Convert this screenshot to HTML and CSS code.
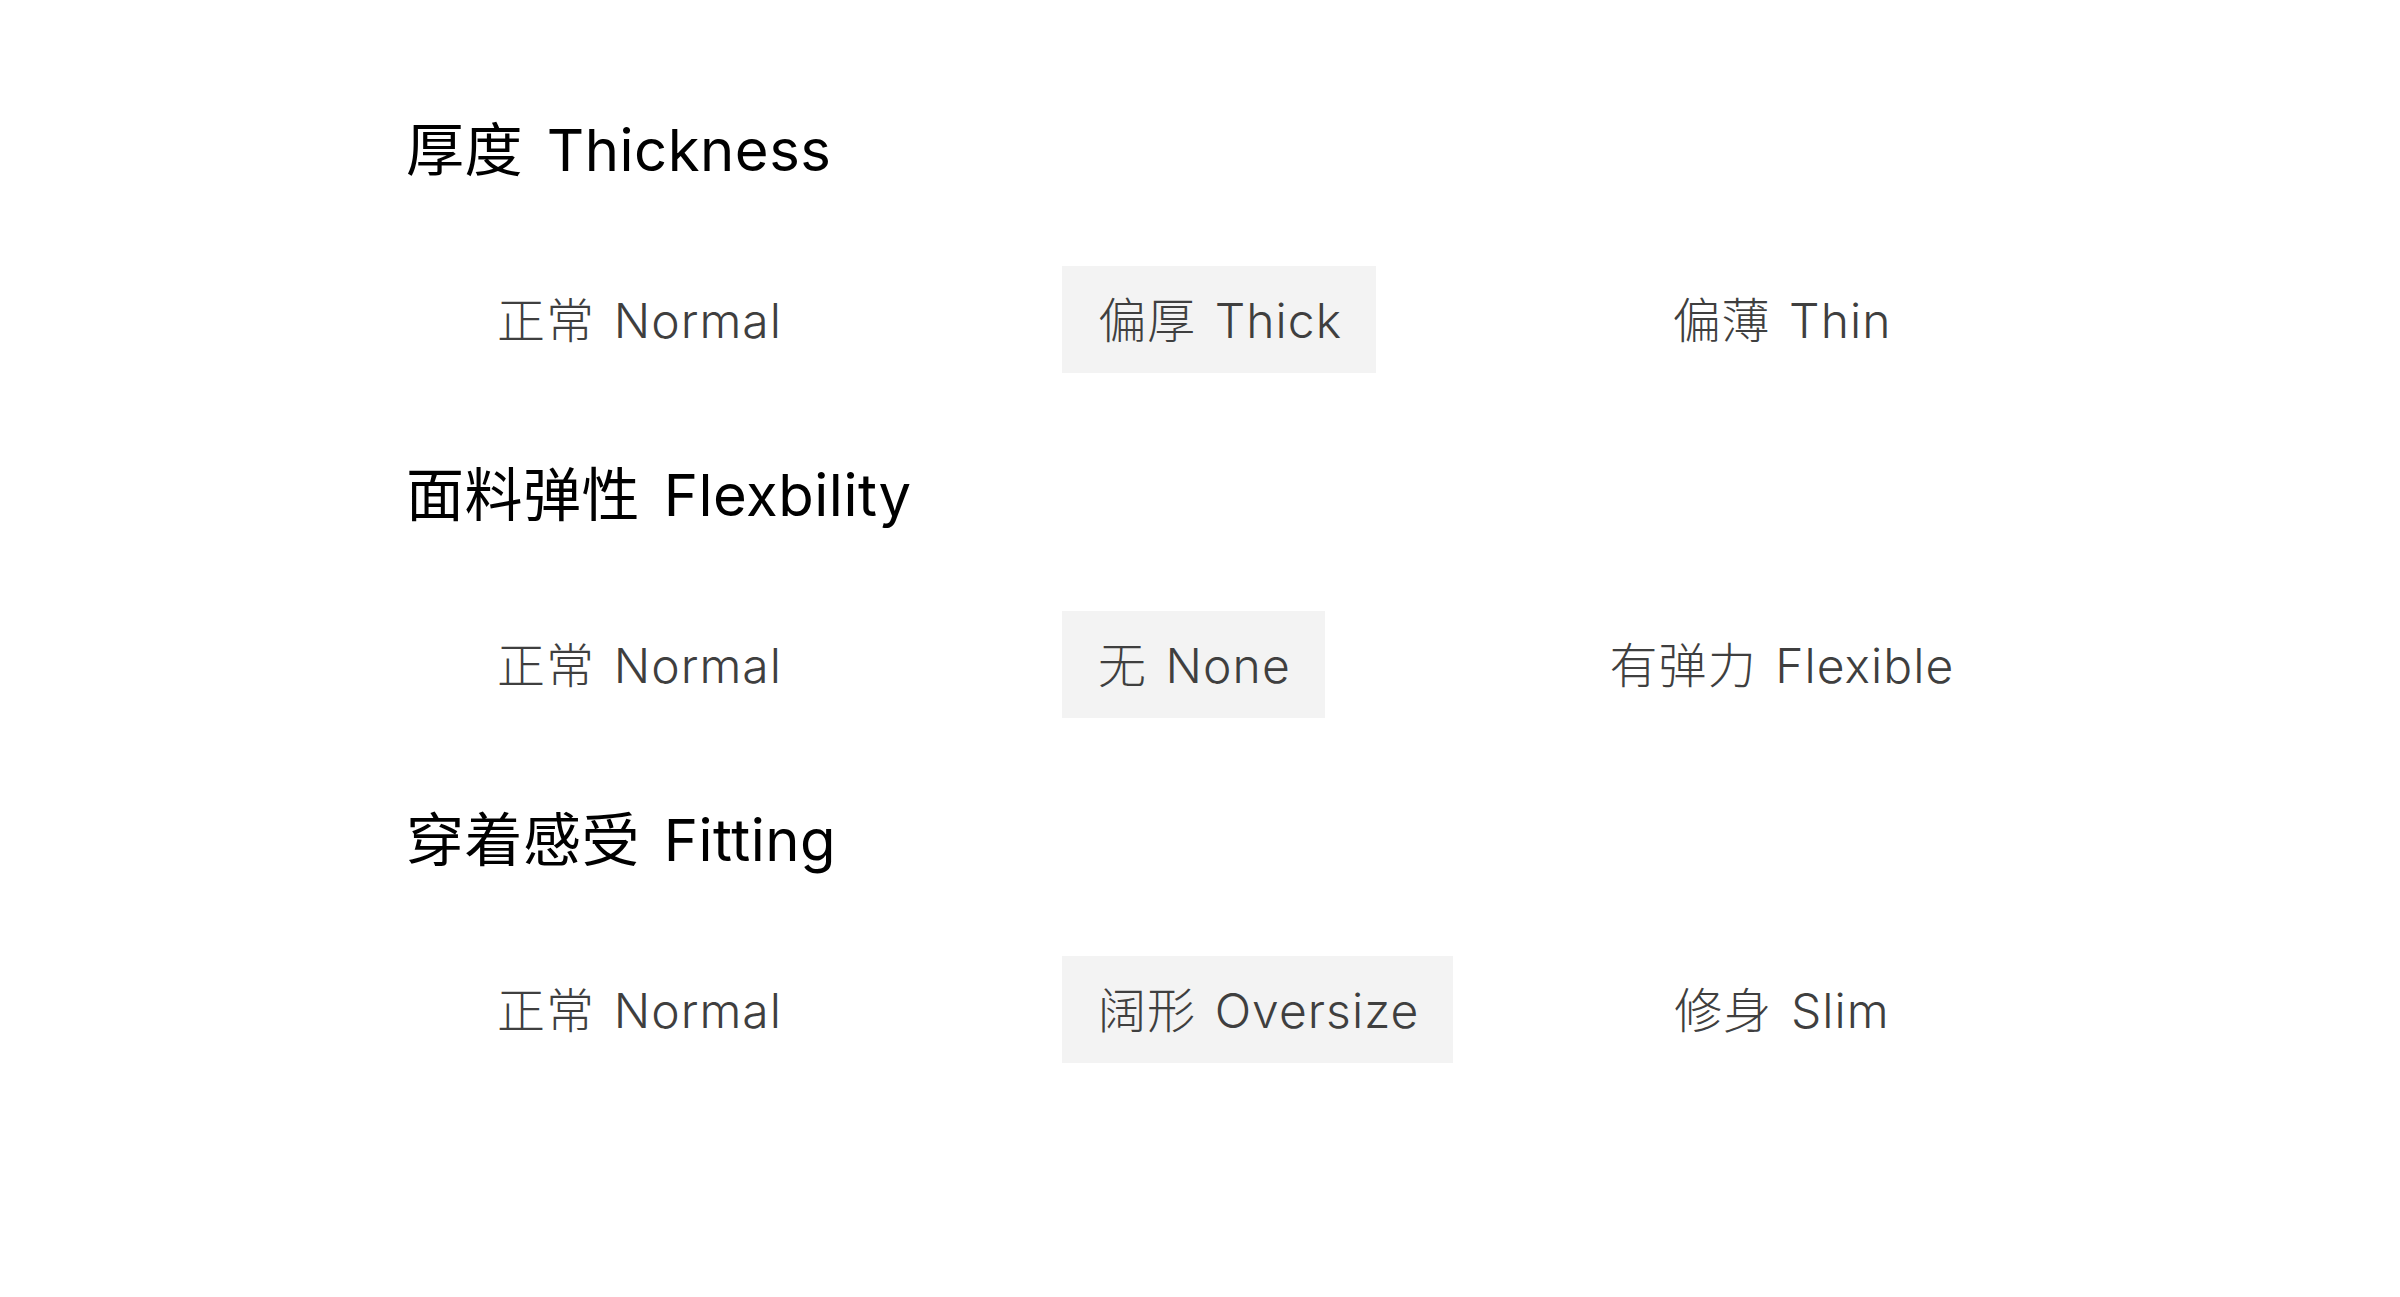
FILE: index.html
```html
<!DOCTYPE html>
<html lang="zh-CN">
<head>
<meta charset="utf-8">
<title>Options</title>
<link rel="stylesheet" href="styles.css">
</head>
<body>
<main class="page">
  <section class="group">
    <h2 class="title">厚度 Thickness</h2>
    <div class="options">
      <div class="opt">正常 Normal</div>
      <div class="opt selected">偏厚 Thick</div>
      <div class="opt center">偏薄 Thin</div>
    </div>
  </section>
  <section class="group">
    <h2 class="title">面料弹性 Flexbility</h2>
    <div class="options">
      <div class="opt">正常 Normal</div>
      <div class="opt selected">无 None</div>
      <div class="opt center">有弹力 Flexible</div>
    </div>
  </section>
  <section class="group">
    <h2 class="title">穿着感受 Fitting</h2>
    <div class="options">
      <div class="opt">正常 Normal</div>
      <div class="opt selected">阔形 Oversize</div>
      <div class="opt center">修身 Slim</div>
    </div>
  </section>
</main>
</body>
</html>
```
FILE: styles.css
```css
html, body {
  margin: 0;
  padding: 0;
  background: #ffffff;
}
body {
  font-family: Inter, "Noto Sans CJK SC", sans-serif;
}
.page {
  display: flex;
  flex-direction: column;
  gap: 82px;
  padding: 110px 0 0 406px;
}
.group {
  display: flex;
  flex-direction: column;
  gap: 76px;
}
.title {
  margin: 0;
  font-size: 58px;
  line-height: 80px;
  font-weight: 400;
  letter-spacing: 0.5px;
  word-spacing: 7px;
  color: #000;
}
.options {
  display: grid;
  grid-template-columns: 601px 400px 638px;
  margin-left: 55px;
}
.opt {
  box-sizing: border-box;
  justify-self: start;
  height: 107px;
  display: flex;
  align-items: center;
  padding: 0 34px 5px 36px;
  font-size: 48px;
  font-weight: 300;
  letter-spacing: 1.05px;
  word-spacing: 4px;
  color: #3f3f3f;
  white-space: nowrap;
}
.opt.selected {
  background: #f3f3f3;
}
.opt.center {
  justify-self: center;
}
```
